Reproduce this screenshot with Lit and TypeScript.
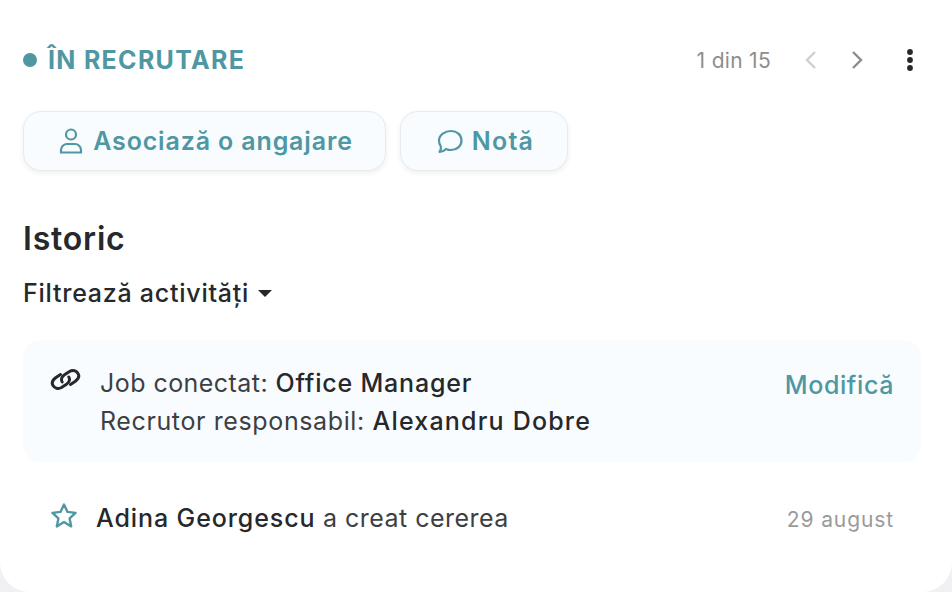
import { LitElement, html, css } from "lit";
import { customElement } from "lit/decorators.js";

@customElement("app-root")
export class AppRoot extends LitElement {
  static styles = css`
    :host { display: block; width: 952px; height: 592px; background: #f1f1f3; font-family: Inter, "Open Sans", sans-serif; color: #26282b; overflow: hidden; }
    .card { box-sizing: border-box; width: 952px; height: 592px; background: #fff; border-radius: 0 0 30px 30px; padding: 43px 32px 0 23px; }
    .top { display: flex; align-items: center; height: 34px; }
    .dot { width: 14px; height: 14px; border-radius: 50%; background: #4f97a3; margin-right: 11px; }
    .status { font-size: 25px; font-weight: 700; color: #4f97a3; letter-spacing: 1.3px; flex: 1; }
    .count { font-size: 21px; color: #8e8e8e; letter-spacing: 0.3px; }
    .nav { display: flex; align-items: center; margin-left: 33px; gap: 32px; }
    .nav svg { display: block; }
    .more { margin-left: 42px; margin-right: 6px; }
    .actions { display: flex; gap: 14px; margin-top: 34px; }
    .btn { box-sizing: border-box; height: 60px; border: 1px solid #e8eaee; border-radius: 18px; background: #f8fcff; box-shadow: 0 2px 5px rgba(40,50,70,.08); display: flex; align-items: center; justify-content: center; gap: 10px; color: #4f97a3; font-size: 25px; font-weight: 600; letter-spacing: .85px; }
    .b1 { width: 363px; padding-left: 3px; }
    .b2 { width: 168px; padding-left: 3px; gap: 9px; letter-spacing: 1.2px; }
    h2 { margin: 47px 0 0; font-size: 32px; line-height: 42px; font-weight: 600; color: #26282b; letter-spacing: .8px; }
    .filter { display: flex; align-items: center; gap: 9px; margin-top: 17px; height: 32px; font-size: 25px; font-weight: 500; letter-spacing: .75px; }
    .caret { width: 0; height: 0; border-left: 7.5px solid transparent; border-right: 7.5px solid transparent; border-top: 7px solid #26282b; }
    .panel { margin-top: 31px; margin-right: -1px; height: 122px; box-sizing: border-box; background: #f8fcff; border-radius: 18px; display: flex; padding: 24px 27px 0 27px; }
    .link { margin-top: 3px; margin-right: 19px; flex: none; }
    .lines { flex: 1; font-size: 25px; line-height: 38px; color: #3d3f42; font-weight: 400; letter-spacing: .45px; }
    .lines b { letter-spacing: .8px; }
    .l2 { letter-spacing: .62px; }
    .lines .l2 b { letter-spacing: 1.2px; }
    b { font-weight: 500; color: #26282b; letter-spacing: .9px; }
    .edit { color: #4f97a3; font-size: 25px; font-weight: 500; line-height: 42px; letter-spacing: .6px; }
    .event { display: flex; align-items: center; margin-top: 37px; padding: 0 26px 0 27px; height: 38px; font-size: 25px; color: #3d3f42; letter-spacing: .47px; }
    .star { margin-right: 18px; flex: none; margin-top: -6px; }
    .event .t { flex: 1; }
    .date { font-size: 21px; color: #9a9a9a; letter-spacing: .9px; margin-top: 2px; }
  `;
  render() {
    return html`<div class="card">
      <div class="top">
        <span class="dot"></span><span class="status">ÎN RECRUTARE</span>
        <span class="count">1 din 15</span>
        <div class="nav">
          <svg width="14" height="20" viewBox="0 0 14 20" fill="none" stroke="#cfcfcf" stroke-width="2.4"><path d="M11 2 3 10l8 8"/></svg>
          <svg width="14" height="20" viewBox="0 0 14 20" fill="none" stroke="#8c8c8c" stroke-width="2.4"><path d="m3 2 8 8-8 8"/></svg>
        </div>
        <svg class="more" width="8" height="24" viewBox="0 0 8 24" fill="#26282b"><circle cx="4" cy="4" r="2.9"/><circle cx="4" cy="12" r="2.9"/><circle cx="4" cy="20" r="2.9"/></svg>
      </div>
      <div class="actions">
        <div class="btn b1">
          <svg width="24" height="26" viewBox="0 0 24 26" fill="none" stroke="#4f97a3" stroke-width="2.2"><circle cx="12" cy="6.5" r="5"/><path d="M2 24.5v-2.5c0-3.500 3-6 6-6h8c3 0 6 2.500 6 6v2.500z"/></svg>
          <span>Asociază o angajare</span>
        </div>
        <div class="btn b2">
          <svg width="26" height="25" viewBox="0 0 26 25" fill="none" stroke="#4f97a3" stroke-width="2.2" stroke-linejoin="round"><path d="M14 2c5.800 0 10.500 4 10.500 9.500S19.800 21 14 21c-1.800 0-3.500-.4-5-1.100-1.500 1.600-3.500 2.800-6.500 3.100 1.200-1.500 1.700-3.200 1.400-5.400C2.700 16 2 13.800 2 11.500 2 6 8.200 2 14 2z"/></svg>
          <span>Notă</span>
        </div>
      </div>
      <h2>Istoric</h2>
      <div class="filter"><span>Filtrează activități</span><span class="caret"></span></div>
      <div class="panel">
        <svg class="link" width="31" height="25" viewBox="0 0 31 25" fill="none" stroke="#26282b" stroke-width="3" stroke-linecap="round">
          <path d="M10.500 7.500 6 10.500C2.500 13 1.500 16 3 18.500s5 4 8.500 2l5-3.300c3-2 3.700-5.200 2.300-7.200"/>
          <path d="M20.500 17.500 25 14.500c3.500-2.500 4.500-5.500 3-8s-5-4-8.500-2l-5 3.300c-3 2-3.700 5.200-2.300 7.200"/>
        </svg>
        <div class="lines"><div>Job conectat: <b>Office Manager</b></div><div class="l2">Recrutor responsabil: <b>Alexandru Dobre</b></div></div>
        <div class="edit">Modifică</div>
      </div>
      <div class="event">
        <svg class="star" width="28" height="27" viewBox="0 0 28 27" fill="none" stroke="#4f97a3" stroke-width="2.4" stroke-linejoin="round"><path d="m14 2.500 3.500 7.400 8 1-5.900 5.500 1.600 8L14 20l-7.200 4.400 1.600-8-5.900-5.500 8-1z"/></svg>
        <span class="t"><b>Adina Georgescu</b> a creat cererea</span>
        <span class="date">29 august</span>
      </div>
    </div>`;
  }
}
